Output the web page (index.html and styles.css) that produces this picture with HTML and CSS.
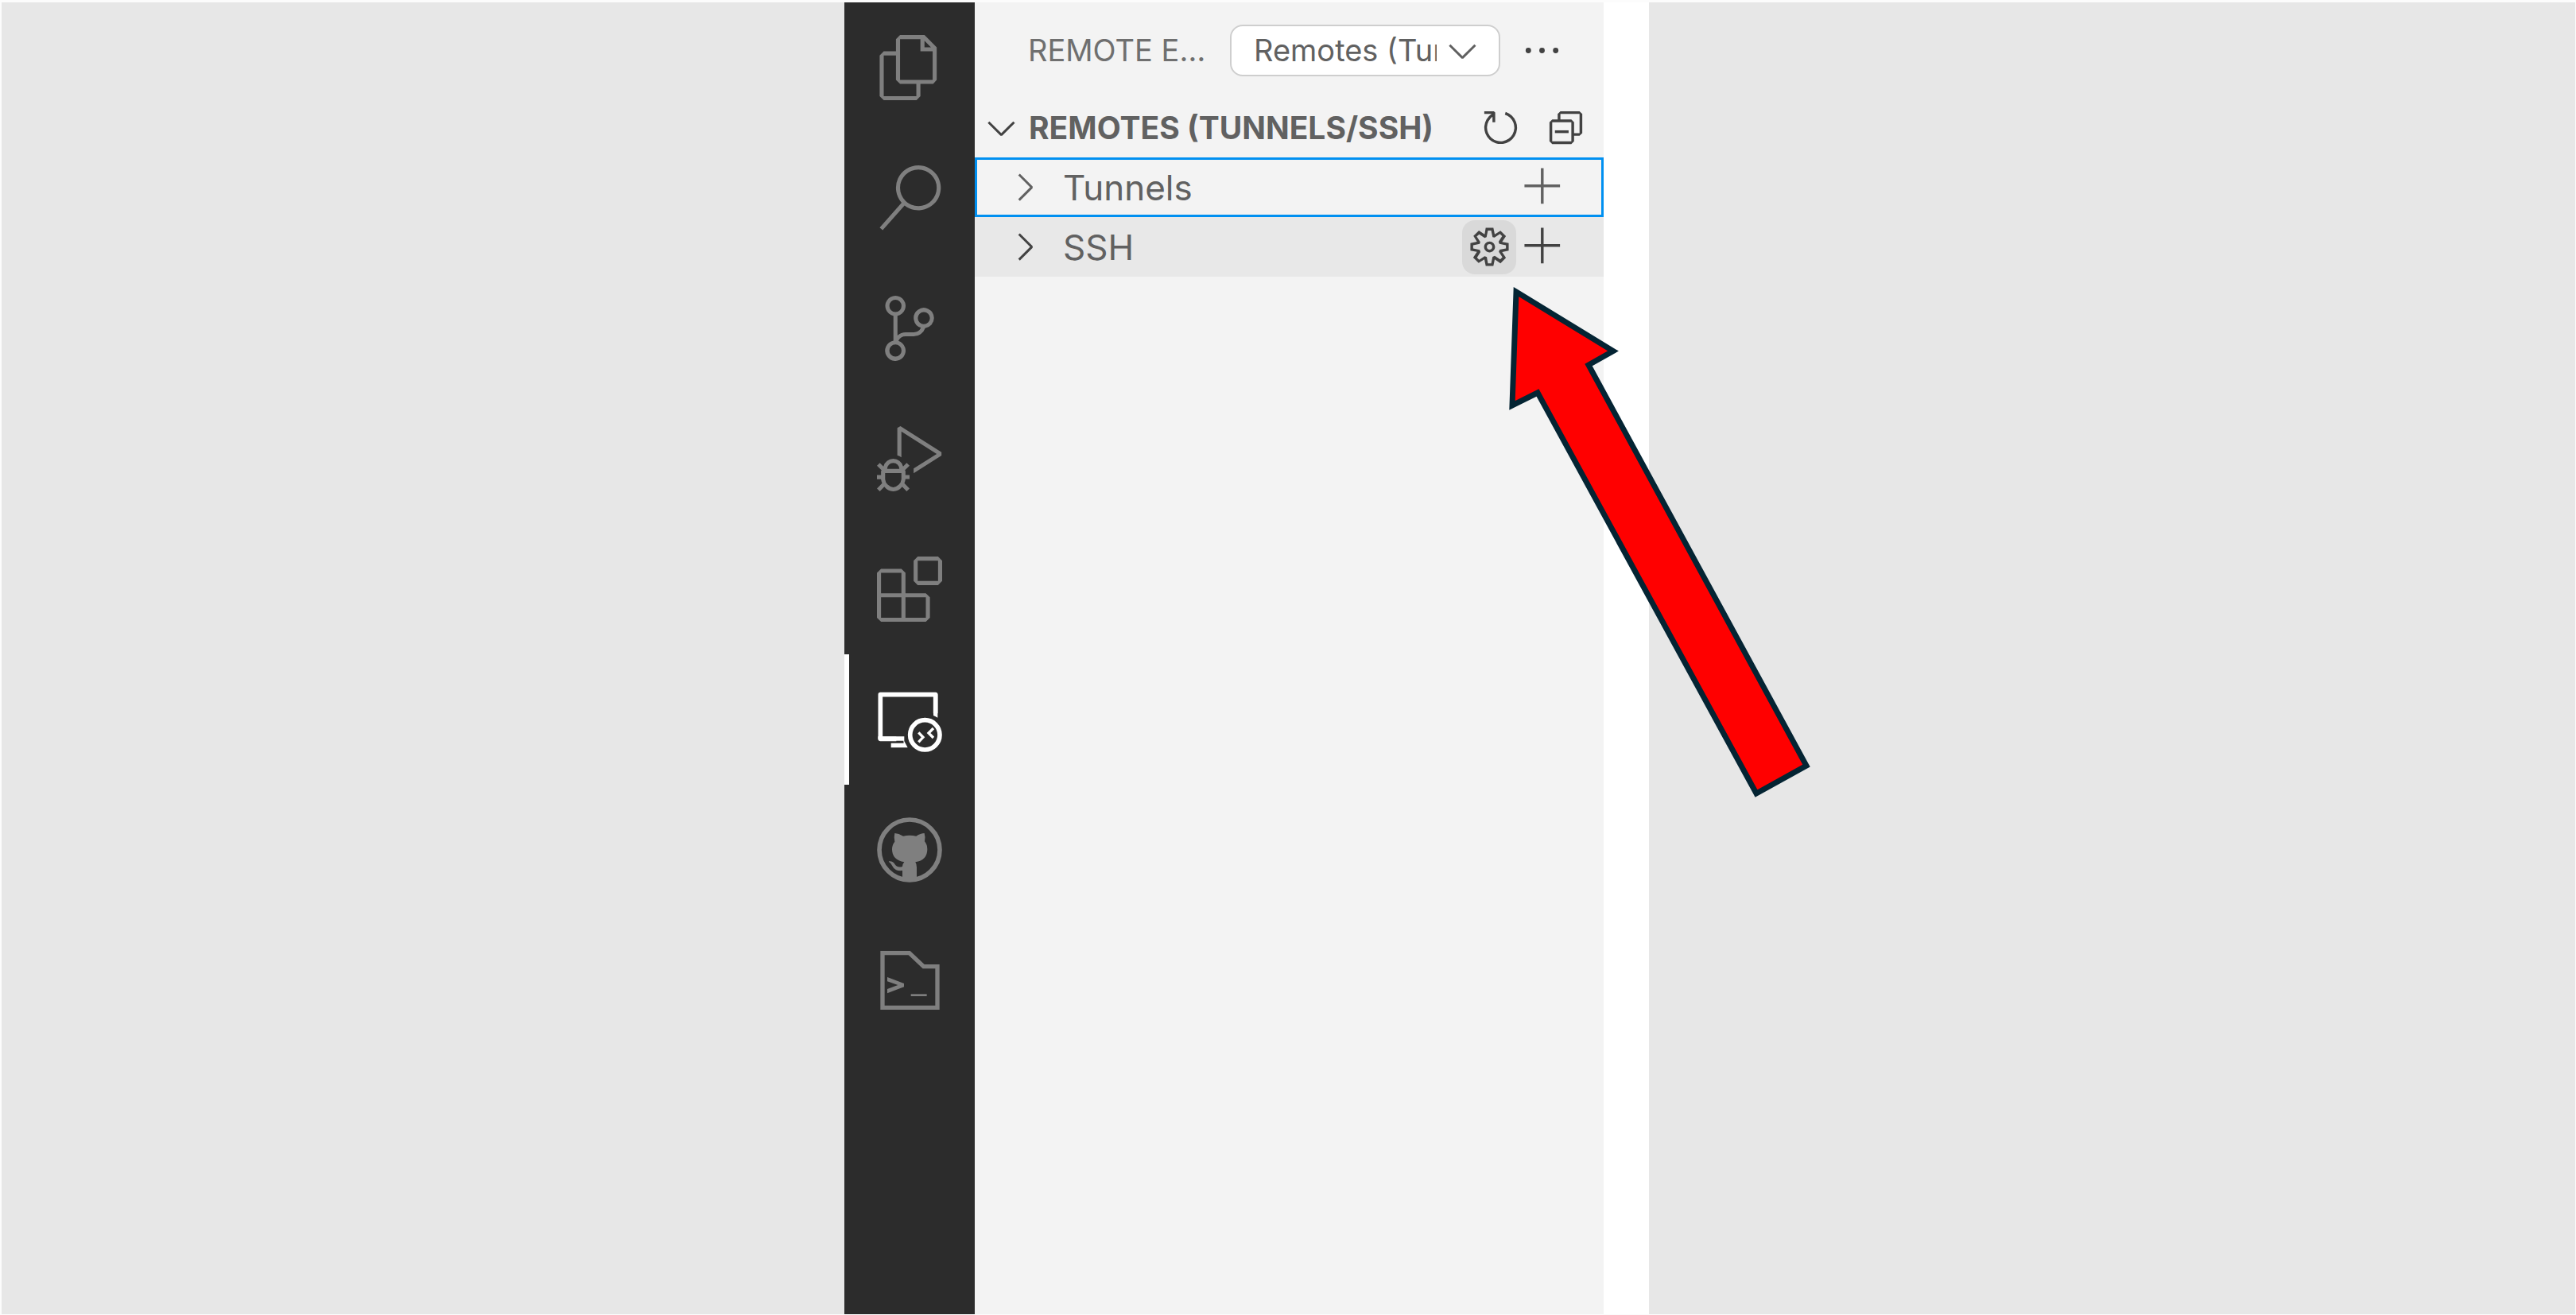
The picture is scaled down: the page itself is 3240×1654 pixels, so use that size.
FILE: index.html
```html
<!DOCTYPE html>
<html lang="en">
<head>
<meta charset="utf-8">
<title>Remote Explorer</title>
<link rel="stylesheet" href="styles.css">
</head>
<body>
<div class="stage">
  <div class="backdrop"></div>

  <nav class="rail" aria-label="Activity bar">
    <button class="rail-item" aria-label="Explorer"><svg viewBox="0 0 24 24"><path d="M17.5 0h-9L7 1.5V6H2.5L1 7.5v15.07L2.5 24h12.07L16 22.57V18h4.7l1.3-1.43V4.5L17.5 0zm0 2.12l2.38 2.38H17.5V2.12zm-3 20.38h-12v-15H7v9.07L8.5 18h6v4.5zm6-6h-12v-15H16V6h4.5v10.5z"/></svg></button>
    <button class="rail-item" aria-label="Search"><svg viewBox="0 0 24 24"><path d="M15.25 0a8.25 8.25 0 0 0-6.18 13.72L1 22.88l1.12 1 8.05-9.12A8.251 8.251 0 1 0 15.25.01V0zm0 15a6.75 6.75 0 1 1 0-13.5 6.75 6.75 0 0 1 0 13.5z"/></svg></button>
    <button class="rail-item" aria-label="Source control"><svg viewBox="0 0 24 24"><path d="M21.007 8.222A3.738 3.738 0 0 0 15.045 5.2a3.737 3.737 0 0 0 1.156 6.583 2.988 2.988 0 0 1-2.668 1.67h-2.99a4.456 4.456 0 0 0-2.989 1.165V7.4a3.737 3.737 0 1 0-1.494 0v9.117a3.776 3.776 0 1 0 1.816.099 2.99 2.99 0 0 1 2.668-1.667h2.99a4.484 4.484 0 0 0 4.223-3.039 3.736 3.736 0 0 0 3.25-3.687zM4.565 3.738a2.242 2.242 0 1 1 4.484 0 2.242 2.242 0 0 1-4.484 0zm4.484 16.441a2.242 2.242 0 1 1-4.484 0 2.242 2.242 0 0 1 4.484 0zm8.221-9.715a2.242 2.242 0 1 1 0-4.485 2.242 2.242 0 0 1 0 4.485z"/></svg></button>
    <button class="rail-item" aria-label="Run and debug"><svg viewBox="0 0 24 24"><path d="M10.94 13.5l-1.32 1.32a3.73 3.73 0 0 0-7.24 0L1.06 13.5 0 14.56l1.72 1.72-.22.22V18H0v1.5h1.5v.08c.077.489.214.966.41 1.42L0 22.94 1.06 24l1.65-1.65A4.308 4.308 0 0 0 6 24a4.31 4.31 0 0 0 3.29-1.65L10.94 24 12 22.94 10.09 21c.198-.464.336-.951.41-1.45v-.1H12V18h-1.5v-1.5l-.22-.22L12 14.56l-1.06-1.06zM6 13.5a2.25 2.25 0 0 1 2.25 2.25h-4.5A2.25 2.25 0 0 1 6 13.5zm3 6a3.33 3.33 0 0 1-3 3 3.33 3.33 0 0 1-3-3v-2.25h6v2.25zm14.76-9.9v1.26L13.5 17.37V15.6l8.5-5.37L9 2v9.46a5.07 5.07 0 0 0-1.5-.72V.63L8.64 0l15.12 9.6z"/></svg></button>
    <button class="rail-item" aria-label="Extensions"><svg viewBox="0 0 24 24"><path d="M13.5 1.5L15 0h7.5L24 1.5V9l-1.5 1.5H15L13.5 9V1.5zm1.5 0V9h7.5V1.5H15zM0 15V6l1.5-1.5H9L10.5 6v7.5H18l1.5 1.5v7.5L18 24H1.5L0 22.5V15zm9-1.5V6H1.5v7.5H9zM9 15H1.5v7.5H9V15zm1.5 7.5H18V15h-7.5v7.5z"/></svg></button>
    <button class="rail-item active" aria-label="Remote Explorer" aria-current="page"><svg class="line" viewBox="0 0 246 246" stroke-width="17"><path d="M213 28h16v88q-8-5-16-8zM4 187h99v18l13 24H53v-17h48l-1-9H12q-8-1-8-9z" fill="currentColor" stroke="none"/><path d="M221 100V29H13v167h60" stroke-linejoin="round"/><circle cx="181" cy="181" r="56"/><path d="M157 172l17 18-17 18M213 156l-18 18 18 18" stroke-width="10"/></svg></button>
    <button class="rail-item" aria-label="GitHub"><svg class="line" viewBox="0 0 246 246" stroke-width="17"><circle cx="123" cy="123" r="114"/><path fill="currentColor" stroke="none" d="M67 60q15 1 32 11 24-5 49 0 17-11 31-11 5 17 1 31 10 12 10 30 0 41-45 48 5 8 5 20v48q-27 6-54 0v-36c-33 4-36-18-45-28q-8-5-6-7 15-2 23 12 10 14 28 8 1-11 7-17-46-8-46-48 0-17 10-29-4-15 0-32z"/></svg></button>
    <button class="rail-item" aria-label="Console"><svg class="line" viewBox="0 0 246 246" stroke-width="16"><path d="M21 20h101l54 51h52v155H21z"/><path fill="currentColor" stroke="none" d="M39 111l63 24v13l-63 24v-16l40-15-40-14z"/><path d="M128 179h60" stroke-width="8"/></svg></button>
  </nav>

  <main class="panel">
    <header class="panel-head">
      <h1 class="panel-title">Remote Explorer</h1>
      <div class="picker">
        <select class="picker-select" aria-label="Remote type"><option>Remotes (Tunnels/SSH)</option></select>
        <svg class="icon picker-arrow" viewBox="0 0 16 16"><path d="M7.976 10.072l4.357-4.357.62.618L8.284 11h-.618L3 6.333l.619-.618 4.357 4.357z"/></svg>
      </div>
      <button class="action" aria-label="More actions"><svg class="icon" viewBox="0 0 16 16"><path d="M4 8a1 1 0 1 1-2 0 1 1 0 0 1 2 0zm5 0a1 1 0 1 1-2 0 1 1 0 0 1 2 0zm5 0a1 1 0 1 1-2 0 1 1 0 0 1 2 0z"/></svg></button>
    </header>

    <section>
      <div class="section-head">
        <svg class="icon" viewBox="0 0 16 16"><path d="M7.976 10.072l4.357-4.357.62.618L8.284 11h-.618L3 6.333l.619-.618 4.357 4.357z"/></svg>
        <h2 class="section-title">Remotes (Tunnels/SSH)</h2>
        <button class="action" aria-label="Refresh"><svg class="icon" viewBox="0 0 16 16"><path d="M4.681 3H2V2h3.5l.5.5V6H5V4a5 5 0 1 0 4.53-.761l.302-.954A6 6 0 1 1 4.681 3z"/></svg></button>
        <button class="action" aria-label="Collapse all"><svg class="icon" viewBox="0 0 16 16"><path d="M9 9H4v1h5V9z"/><path fill-rule="evenodd" d="M5 3l1-1h7l1 1v7l-1 1h-2v2l-1 1H3l-1-1V6l1-1h2V3zm1 2h4l1 1v4h2V3H6v2zm4 1H3v7h7V6z"/></svg></button>
      </div>
      <ul class="tree">
        <li class="row focused">
          <svg class="icon" viewBox="0 0 16 16"><path d="M10.072 8.024L5.715 3.667l.618-.62L11 7.716v.618L6.333 13l-.618-.619 4.357-4.357z"/></svg>
          <span class="row-label">Tunnels</span>
          <button class="action" aria-label="Add tunnel"><svg class="icon" viewBox="0 0 16 16"><path d="M14 7v1H8v6H7V8H1V7h6V1h1v6h6z"/></svg></button>
        </li>
        <li class="row hovered">
          <svg class="icon" viewBox="0 0 16 16"><path d="M10.072 8.024L5.715 3.667l.618-.62L11 7.716v.618L6.333 13l-.618-.619 4.357-4.357z"/></svg>
          <span class="row-label">SSH</span>
          <button class="action pressed" aria-label="Open SSH config file"><svg class="icon" viewBox="0 0 16 16"><path fill-rule="evenodd" d="M9.1 4.4L8.6 2H7.4l-.5 2.4-.7.3-2-1.3-.9.8 1.3 2-.2.7-2.4.5v1.2l2.4.5.3.8-1.3 2 .8.8 2-1.3.8.3.4 2.3h1.2l.5-2.4.8-.3 2 1.3.8-.8-1.3-2 .3-.8 2.3-.4V7.4l-2.4-.5-.3-.8 1.3-2-.8-.8-2 1.3-.7-.2zM9.4 1l.5 2.4L12 2.1l2 2-1.4 2.1 2.4.4v2.8l-2.4.5L14 12l-2 2-2.1-1.4-.5 2.4H6.6l-.5-2.4L4 13.9l-2-2 1.4-2.1L1 9.4V6.6l2.4-.5L2.1 4l2-2 2.1 1.4.4-2.4h2.8zm.6 7c0 1.1-.9 2-2 2s-2-.9-2-2 .9-2 2-2 2 .9 2 2zM8 9c.6 0 1-.4 1-1s-.4-1-1-1-1 .4-1 1 .4 1 1 1z"/></svg></button>
          <button class="action" aria-label="Add SSH host"><svg class="icon" viewBox="0 0 16 16"><path d="M14 7v1H8v6H7V8H1V7h6V1h1v6h6z"/></svg></button>
        </li>
      </ul>
    </section>

    <svg class="pointer" viewBox="0 0 384 656" aria-hidden="true"><path d="M9 6L131 80.500 100 98 374 602 311 637 36 133 4 149z"/></svg>
  </main>

  <div class="gutter"></div>
  <div class="backdrop"></div>
</div>
</body>
</html>
```
FILE: styles.css
```css
* {
  box-sizing: border-box;
}

body {
  margin: 0;
  background: #fcfcfc;
  color: #616161;
  font-family: Inter, "Liberation Sans", sans-serif;
}

button {
  border: 0;
  padding: 0;
  background: none;
  color: inherit;
}

h1, h2, ul {
  margin: 0;
  padding: 0;
}

svg {
  display: block;
  fill: currentColor;
}

.stage {
  display: grid;
  grid-template-columns: 1060fr 164px 791px 57px 1165fr;
  min-height: 100vh;
  padding: 3px 1px 1px 2px;
}

.backdrop {
  background: #e7e7e7;
}

.gutter {
  background: #fff;
}

/* Activity bar */
.rail {
  display: flex;
  flex-direction: column;
  background: #2c2c2c;
  color: #7f7f7f;
}

.rail-item {
  display: flex;
  align-items: center;
  justify-content: center;
  height: 164px;
  border: solid transparent;
  border-width: 0 6px;
}

.rail-item svg {
  width: 82px;
  height: 82px;
}

.rail-item.active {
  border-left-color: #fff;
  color: #fff;
}

.line {
  fill: none;
  stroke: currentColor;
}

/* Side panel */
.panel {
  position: relative;
  background: #f3f3f3;
}

.icon {
  flex: none;
  width: 55px;
  height: 55px;
  color: #424242;
}

.action {
  display: flex;
  flex: none;
  align-items: center;
  justify-content: center;
  width: 68px;
  height: 68px;
  border-radius: 16px;
}

.action.pressed {
  background: #d9d9d9;
}

.panel-head {
  display: flex;
  align-items: center;
  height: 120px;
  padding: 0 44px 0 67px;
}

.panel-title {
  flex: 1;
  min-width: 0;
  margin-right: 24px;
  overflow: hidden;
  color: #6f6f6f;
  font-size: 38px;
  font-weight: 400;
  text-overflow: ellipsis;
  text-transform: uppercase;
  white-space: nowrap;
}

.picker {
  position: relative;
  width: 340px;
  margin-right: 18px;
}

.picker-select {
  width: 100%;
  height: 65px;
  padding: 0 78px 0 28px;
  border: 2px solid #cecece;
  border-radius: 16px;
  appearance: none;
  background: #fff;
  color: #616161;
  font: 400 38px Inter, "Liberation Sans", sans-serif;
}

.picker-arrow {
  position: absolute;
  top: 5px;
  right: 20px;
  color: #616161;
  pointer-events: none;
}

.section-head {
  display: flex;
  align-items: center;
  gap: 14px;
  height: 75px;
  padding: 0 14px 0 6px;
}

.section-title {
  flex: 1;
  margin-left: -7px;
  font-size: 39px;
  font-weight: 700;
  text-transform: uppercase;
  white-space: nowrap;
}

.tree {
  list-style: none;
}

.row {
  display: flex;
  align-items: center;
  height: 75px;
  padding: 0 42px 0 35px;
}

.row.focused {
  outline: 3px solid #0090f1;
  outline-offset: -3px;
}

.row.focused .icon {
  color: #616161;
}

.row.hovered {
  background: #e8e8e8;
}

.row-label {
  flex: 1;
  padding-left: 21px;
  font-size: 44px;
}

/* Callout arrow laid over the panel */
.pointer {
  position: absolute;
  top: 358px;
  left: 672px;
  width: 384px;
  height: 656px;
  fill: #f00;
  stroke: #042433;
  stroke-width: 7px;
  overflow: visible;
}
```
